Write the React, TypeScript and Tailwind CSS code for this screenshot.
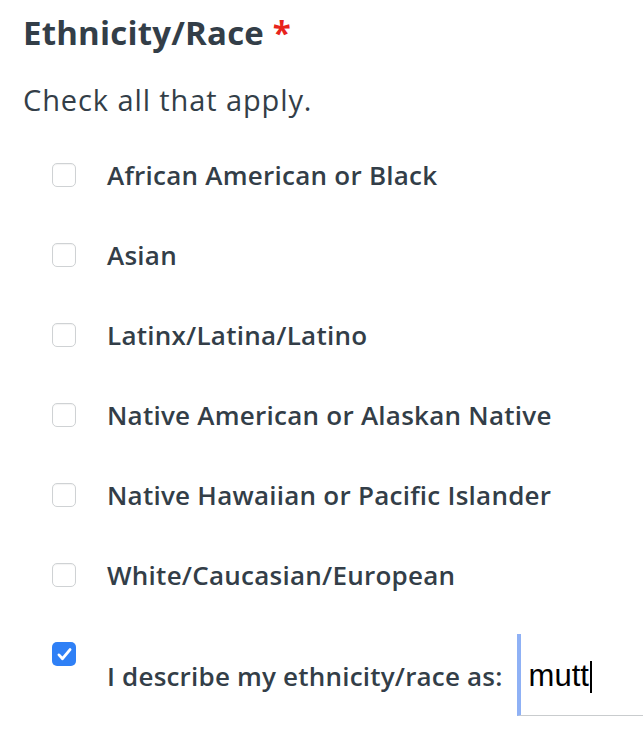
import { useState } from "react";

const options = [
  "African American or Black",
  "Asian",
  "Latinx/Latina/Latino",
  "Native American or Alaskan Native",
  "Native Hawaiian or Pacific Islander",
  "White/Caucasian/European",
];

function Box({ checked }: { checked: boolean }) {
  if (checked) {
    return (
      <span className="flex h-6 w-6 shrink-0 items-center justify-center rounded-[5px] bg-[#2f80f6]">
        <svg viewBox="0 0 24 24" className="h-[19px] w-[19px]" fill="none" stroke="white" strokeWidth="3.6" strokeLinecap="round" strokeLinejoin="round">
          <path d="M5 12.5l4.5 4.8L19 5.8" />
        </svg>
      </span>
    );
  }
  return <span className="block h-6 w-6 shrink-0 rounded-[5px] border border-[#cfd2d4] bg-white shadow-[inset_0_1px_1px_rgba(0,0,0,0.05)]" />;
}

export default function App() {
  const [checked, setChecked] = useState<boolean[]>([false, false, false, false, false, false, true]);
  const toggle = (i: number) => setChecked((c) => c.map((v, j) => (j === i ? !v : v)));

  return (
    <div className="min-h-screen bg-white pl-[23px] text-[#333e48] font-['Open_Sans',sans-serif]">
      {/* Question title */}
      <h1 className="pt-[13px] text-[33px] font-bold leading-[40px] tracking-[0.2px]">
        Ethnicity/Race <span className="text-[#e8231c]">*</span>
      </h1>
      <p className="mt-[27px] text-[29px] leading-[40px] tracking-[0.9px]">Check all that apply.</p>

      {/* Options */}
      <div className="mt-[15px] pl-[29px]">
        {options.map((label, i) => (
          <label key={label} className="flex h-[80px] cursor-pointer items-center gap-[31px]" onClick={() => toggle(i)}>
            <Box checked={checked[i]} />
            <span className="text-[26px] font-semibold leading-none tracking-[0.25px]">{label}</span>
          </label>
        ))}
        <div className="flex items-start gap-[31px]">
          <span className="mt-[27px] cursor-pointer" onClick={() => toggle(6)}>
            <Box checked={checked[6]} />
          </span>
          <div className="mt-[19px] flex flex-1 items-center gap-[14px]">
            <span className="whitespace-nowrap pt-[2px] text-[26px] font-semibold leading-none tracking-[0.2px]">I describe my ethnicity/race as:</span>
            <div className="flex h-[82px] flex-1 items-center border-l-4 border-l-[#8fb1f5] border-b border-b-[#c9ccce] pl-[8px] pt-[4px] font-['Liberation_Sans',sans-serif] text-[31px] text-black">
              mutt
              <span className="ml-[1px] inline-block h-[32px] w-[2px] bg-black" />
            </div>
          </div>
        </div>
      </div>
    </div>
  );
}
